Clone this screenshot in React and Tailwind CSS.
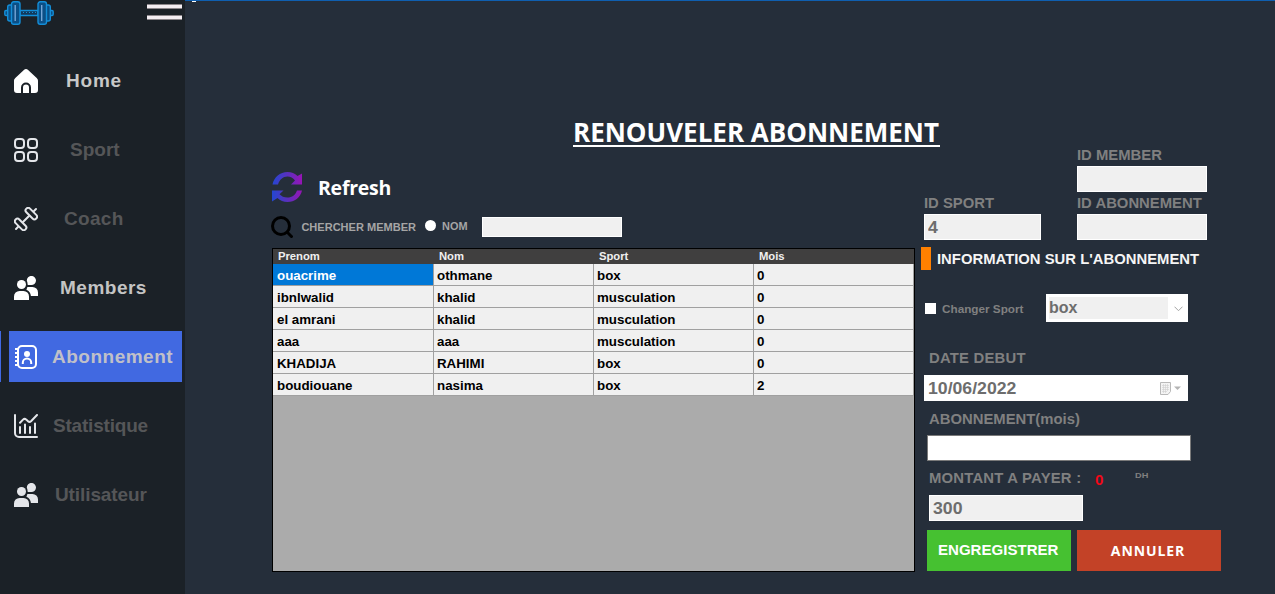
import React from "react";

const ARIAL = "font-['Liberation_Sans',sans-serif] font-bold";
const SEGOE = "font-['Open_Sans',sans-serif] font-bold";

function HomeIcon() {
  return (
    <svg width="24" height="24" viewBox="0 0 24 24" fill="none">
      <path d="M12 0c.8 0 1.5.3 2.1.9l8.6 8.2c.8.8 1.3 1.8 1.3 2.9v9a3 3 0 0 1-3 3H3a3 3 0 0 1-3-3v-9c0-1.100.5-2.100 1.300-2.900L9.900.9C10.500.3 11.200 0 12 0Z" fill="#fff" />
      <path d="M8 24.500v-6a4 4 0 0 1 8 0v6" stroke="#1b2127" strokeWidth="2" />
    </svg>
  );
}

function AppsIcon() {
  return (
    <svg width="24" height="24" viewBox="0 0 24 24" fill="none" stroke="#e4e6ea" strokeWidth="2">
      <rect x="1" y="1" width="9" height="9" rx="3" />
      <rect x="14" y="1" width="9" height="9" rx="3" />
      <rect x="1" y="14" width="9" height="9" rx="3" />
      <rect x="14" y="14" width="9" height="9" rx="3" />
    </svg>
  );
}

function GymIcon() {
  return (
    <svg width="24" height="24" viewBox="0 0 24 24" fill="none" stroke="#e4e6ea" strokeWidth="2" strokeLinecap="round">
      <g transform="rotate(45 17.300 6.600)">
        <rect x="10.300" y="4" width="14" height="5.200" rx="2.600" />
      </g>
      <g transform="rotate(45 6.600 17.400)">
        <rect x="-0.4" y="14.800" width="14" height="5.200" rx="2.600" />
      </g>
      <path d="M9 15l6-6M20 4l2-2M2 22l2.200-2.200" />
    </svg>
  );
}

function UsersIcon({ color = "#fff" }) {
  return (
    <svg width="24" height="24" viewBox="0 0 24 24" fill={color}>
      <circle cx="7.500" cy="8.500" r="4.500" />
      <path d="M0 24v-3.500A5.500 5.500 0 0 1 5.500 15h4a5.500 5.500 0 0 1 5.500 5.500V24Z" />
      <path d="M12.800 4.600A4.600 4.600 0 1 1 17 9.100h-2.300c-.8 0-1-.2-1.100-.8-.1-1.300-.3-2.400-.8-3.700Z" />
      <path d="M13.400 11h5.100a5.500 5.500 0 0 1 5.500 5.500V20h-7.100a7.500 7.500 0 0 0-4.500-6.300Z" />
    </svg>
  );
}

function AddressBookIcon() {
  return (
    <svg width="24" height="24" viewBox="0 0 24 24" fill="none" stroke="#fff" strokeWidth="2">
      <rect x="4" y="1" width="18" height="22" rx="4" />
      <path d="M1 4h3M1 8h3M1 12h3M1 16h3M1 20h3" />
      <circle cx="13" cy="9" r="3" fill="#fff" stroke="none" />
      <path d="M8.800 19v-1.200a4.200 4.200 0 0 1 8.400 0V19" />
    </svg>
  );
}

function StatsIcon() {
  return (
    <svg width="24" height="24" viewBox="0 0 24 24" fill="none" stroke="#e4e6ea" strokeWidth="2" strokeLinecap="round">
      <path d="M1 1v18a4 4 0 0 0 4 4h18" />
      <path d="M6 19v-6M11 19v-8.500M16 19v-6M21 19V9.500" />
      <path d="M6 8.800l3-3.200a2.300 2.300 0 0 1 3.200 0l1.800 1.600a2.200 2.200 0 0 0 3 0L23 1" />
    </svg>
  );
}

function DumbbellLogo() {
  return (
    <svg width="50" height="24" viewBox="0 0 50 24" fill="#0b4f86" stroke="#138ed8" strokeWidth="1.400">
      <path d="M4.500 9.500H2a1.200 1.200 0 0 0-1.200 1.200v2.600A1.200 1.200 0 0 0 2 14.500h2.500ZM45.500 9.500H48a1.200 1.200 0 0 1 1.200 1.200v2.600a1.200 1.200 0 0 1-1.200 1.200h-2.500Z" />
      <path d="M16 9.500h18v5H16Z" fill="#12395b" />
      <path d="M19 11.500h1M22 11.500h1M25 11.500h1M28 11.500h1M31 11.500h1" strokeWidth="1.200" />
      <rect x="3.700" y="4" width="5.500" height="16" rx="2" />
      <rect x="40.800" y="4" width="5.500" height="16" rx="2" />
      <rect x="7.500" y="0.8" width="8.500" height="22.400" rx="2.200" />
      <rect x="34" y="0.8" width="8.500" height="22.400" rx="2.200" />
      <path d="M11.200 4v16M37.700 4v16" stroke="#75a6d8" />
    </svg>
  );
}

function RefreshIcon() {
  return (
    <svg width="31" height="30" viewBox="0 0 31 30" fill="none">
      <defs>
        <linearGradient id="refresh" x1="0" y1="0" x2="31" y2="0" gradientUnits="userSpaceOnUse">
          <stop offset="0" stopColor="#2347d2" />
          <stop offset="0.5" stopColor="#5a30bd" />
          <stop offset="1" stopColor="#9c12b5" />
        </linearGradient>
      </defs>
      <path d="M.5 12.500C2 5 8 0 15.500 0c4 0 7.300 1.400 10 4L30 1.500V12.500H19l4-4C21 6 18.500 4.500 15.500 4.500c-4.500 0-8 3-9.500 8Z" fill="url(#refresh)" />
      <path d="M30 18.500c-1.500 7-7.500 11.500-14.500 11.500-4 0-7.300-1.400-10-4L0 29.500V18.500h11.500l-4 3.700c2 2 4.500 3.300 8 3.300 4.500 0 8-2.500 9.500-7Z" fill="url(#refresh)" />
    </svg>
  );
}

function CalendarIcon() {
  return (
    <svg className="shrink-0" width="21" height="13" viewBox="0 0 21 13" fill="none">
      <path d="M.5.5h10v9l-2.500 3H.5Z" fill="#f4f4f4" stroke="#b9b9b9" />
      <path d="M2 3.500h7M2 5.500h7M2 7.500h7M2 9.500h5M3.500 2v9M5.500 2v9M7.500 2v7" stroke="#cfcfcf" strokeWidth="0.6" />
      <path d="M14 4.500h7L17.500 8Z" fill="#b4b4b4" />
    </svg>
  );
}

const NAV = [
  { icon: <HomeIcon />, text: "Home", cls: "pl-[28px] tracking-[0.8px] text-[#c8c8c8]" },
  { icon: <AppsIcon />, text: "Sport", cls: "pl-[32px] text-[#555658]" },
  { icon: <GymIcon />, text: "Coach", cls: "pl-[26px] tracking-[0.3px] text-[#555658]" },
  { icon: <UsersIcon />, text: "Members", cls: "pl-[22px] tracking-[0.5px] text-[#c4c4c4]" },
  { icon: <AddressBookIcon />, text: "Abonnement", cls: "pl-[14px] tracking-[0.5px] text-[#c0c0c8]", active: true },
  { icon: <StatsIcon />, text: "Statistique", cls: "pl-[15px] tracking-[-0.2px] text-[#555658]" },
  { icon: <UsersIcon color="#e4e6ea" />, text: "Utilisateur", cls: "pl-[17px] tracking-[-0.1px] text-[#555658]" },
];

function Sidebar() {
  return (
    <aside className="flex h-full w-[185px] shrink-0 flex-col bg-[#1b2127]">
      <div className="flex h-[55px] items-start justify-between pr-[3px] pl-1">
        <div className="pt-px"><DumbbellLogo /></div>
        <div className="mt-[4px] flex w-[35px] flex-col gap-[6px]">
          <div className="h-[5px] border-y border-[#8c878b] bg-[#f4eef2]" />
          <div className="h-[5px] border-y border-[#8c878b] bg-[#f4eef2]" />
        </div>
      </div>
      <nav className="flex flex-col gap-[18px]">
        {NAV.map((n) => (
          <div key={n.text} className="flex h-[51px] gap-2 pr-[3px]">
            <div className={n.active ? "w-px bg-[#4169e1]" : "w-px"} />
            <div className={`flex flex-1 items-center pl-[5px] ${n.active ? "bg-[#4169e1]" : ""}`}>
              <span className="shrink-0">{n.icon}</span>
              <span className={`${ARIAL} text-[19px] leading-none whitespace-nowrap ${n.cls}`}>{n.text}</span>
            </div>
          </div>
        ))}
      </nav>
    </aside>
  );
}

const ROWS = [
  ["ouacrime", "othmane", "box", "0"],
  ["ibnlwalid", "khalid", "musculation", "0"],
  ["el amrani", "khalid", "musculation", "0"],
  ["aaa", "aaa", "musculation", "0"],
  ["KHADIJA", "RAHIMI", "box", "0"],
  ["boudiouane", "nasima", "box", "2"],
];

function MemberTable() {
  return (
    <div className={`${ARIAL} flex h-[324px] w-[643px] flex-col border border-black bg-[#ababab]`}>
      <div className="grid h-[15px] grid-cols-[161px_160px_160px_160px] items-center bg-[#403f3f] pt-px text-[11.5px] leading-none text-[#f0f0f0]">
        {["Prenom", "Nom", "Sport", "Mois"].map((h) => (
          <span key={h} className="origin-left scale-x-[0.98] pl-[5px]">{h}</span>
        ))}
      </div>
      {ROWS.map((r, i) => (
        <div key={i} className="grid h-[22px] grid-cols-[161px_160px_160px_160px] text-[12px] leading-none text-black">
          {r.map((c, j) => (
            <div
              key={j}
              className={`flex items-center border-r border-b border-[#a0a0a0] pt-[3px] ${j === 0 ? "pl-1" : "pl-[3px]"} ${i === 0 && j === 0 ? "bg-[#0078d7] text-white" : "bg-[#f0f0f0]"}`}
            >
              <span className="origin-left scale-x-[1.11] whitespace-nowrap">{c}</span>
            </div>
          ))}
        </div>
      ))}
    </div>
  );
}

function Caption({ className = "", children }) {
  return (
    <div className={`${ARIAL} flex items-center text-[14px] leading-none text-[#808080] ${className}`}>
      <span className="origin-left scale-x-[1.06] whitespace-nowrap">{children}</span>
    </div>
  );
}

function Field({ className = "", children, end }) {
  return (
    <div className={`${ARIAL} flex h-[26px] items-center justify-between border pl-[3px] text-[16.5px] leading-none text-[#6d6d6d] ${className}`}>
      <span className="origin-left scale-x-[1.07]">{children}</span>
      {end}
    </div>
  );
}

function Form() {
  return (
    <section className="flex w-[301px] flex-col">
      <div className="flex items-end gap-9 pl-1">
        <div className="w-[117px]">
          <Caption className="h-[22px]">ID SPORT</Caption>
          <Field className="border-white bg-[#f0f0f0]">4</Field>
        </div>
        <div className="w-[130px]">
          <Caption className="h-[16px]">ID MEMBER</Caption>
          <Field className="mt-[3px] border-white bg-[#f0f0f0]" />
          <Caption className="h-[22px]">ID ABONNEMENT</Caption>
          <Field className="border-white bg-[#f0f0f0]" />
        </div>
      </div>

      <div className="mt-[7px] flex h-[23px] items-center gap-[6px] pl-px">
        <div className="h-full w-[10px] bg-[#ff8000]" />
        <Caption className="text-[#f5f5f5]">INFORMATION SUR L'ABONNEMENT</Caption>
      </div>

      <div className="mt-6 flex h-7 items-center pl-[5px]">
        <div className="size-[11px] bg-white" />
        <span className={`${ARIAL} ml-[6px] w-[104px] origin-left scale-x-[1.02] pt-[3px] text-[11.5px] leading-none text-[#808080]`}>Changer Sport</span>
        <div className="flex h-full w-[142px] items-center bg-white p-[3px]">
          <div className={`${ARIAL} flex h-full w-[119px] items-center bg-[#f0f0f0] pb-px text-[16px] leading-none text-[#6d6d6d]`}>
            box
          </div>
          <svg className="mt-[2px] ml-[6px]" width="9" height="6" viewBox="0 0 9 6" fill="none" stroke="#a4a4a4"><path d="M.5.700l4 4 4-4" /></svg>
        </div>
      </div>

      <Caption className="mt-[27px] h-[18px] pl-[9px]">
        <span className="tracking-[0.2px]">DATE DEBUT</span>
      </Caption>
      <Field className="mt-2 ml-1 w-[264px] border-white bg-white pr-[6px]" end={<CalendarIcon />}>
        10/06/2022
      </Field>
      <Caption className="mt-[9px] h-[18px] pl-[9px]">ABONNEMENT(mois)</Caption>
      <div className="mt-[7px] ml-[7px] h-[26px] w-[264px] border border-[#7a7a7a] bg-white" />

      <div className="mt-2 flex h-[18px] pl-[9px]">
        <Caption className="w-[166px]">
          <span className="tracking-[0.2px]">MONTANT A PAYER :</span>
        </Caption>
        <span className={`${ARIAL} w-[40px] pt-[3px] text-[15px] leading-none text-[#f00818]`}>0</span>
        <span className={`${ARIAL} origin-left scale-x-[1.15] pt-[3px] text-[8px] leading-none text-[#808080]`}>DH</span>
      </div>
      <Field className="mt-2 ml-[9px] w-[154px] border-white bg-[#f0f0f0]">300</Field>

      <div className="mt-[9px] flex gap-[6px] pl-[7px]">
        <button className={`${ARIAL} flex h-[41px] w-[144px] items-center bg-[#46c131] pb-px pl-[11px] text-[14px] leading-none text-white`}>
          <span className="origin-left scale-x-[1.075]">ENGREGISTRER</span>
        </button>
        <button className={`${SEGOE} flex h-[41px] w-[144px] items-center justify-center bg-[#c34227] pt-px pr-[2px] text-[14px] leading-none tracking-[0.9px] text-white`}>
          ANNULER
        </button>
      </div>
    </section>
  );
}

export default function App() {
  return (
    <div className="flex h-[594px] w-[1275px] overflow-hidden bg-[#252e3a]">
      <Sidebar />
      <main className="flex flex-1 flex-col border-t border-[#0f5fb0]">
        <div className="h-px w-3 pl-[7px]"><div className="h-px w-1 bg-white" /></div>
        <div className="flex h-[145px] items-end pl-[388px]">
          <h1 className={`${SEGOE} flex w-[367px] flex-col border-b-2 border-white text-[26px] leading-[26px] whitespace-nowrap text-white`}>
            <span>RENOUVELER ABONNEMENT</span>
          </h1>
        </div>
        <div className="flex gap-[5px] pl-[87px]">
          <section className="flex w-[643px] flex-col pt-6">
            <div className="flex h-[32px] items-center">
              <RefreshIcon />
              <span className={`${SEGOE} pt-[2px] pl-[15px] text-[19.5px] leading-none tracking-[-0.25px] text-white`}>Refresh</span>
            </div>
            <div className={`${ARIAL} mt-[13px] flex h-[22px] items-center text-[10.5px] leading-none text-[#a5a5a5]`}>
              <svg className="-ml-px shrink-0" width="22" height="22" viewBox="0 0 22 22" fill="none" stroke="#000" strokeWidth="3">
                <circle cx="10" cy="10" r="8.500" />
                <path d="M16 16l5.500 5.500" />
              </svg>
              <span className="w-[124px] origin-left scale-x-[1.05] pl-2 whitespace-nowrap">CHERCHER MEMBER</span>
              <span className="mb-1 ml-[8px] size-[11px] rounded-full bg-white" />
              <span className="ml-[6px] w-[40px] origin-left scale-x-[1.04] pb-px">NOM</span>
              <div className="h-5 w-[140px] border border-white bg-[#f0f0f0]" />
            </div>
            <div className="mt-[10px]"><MemberTable /></div>
          </section>
          <Form />
        </div>
      </main>
    </div>
  );
}
